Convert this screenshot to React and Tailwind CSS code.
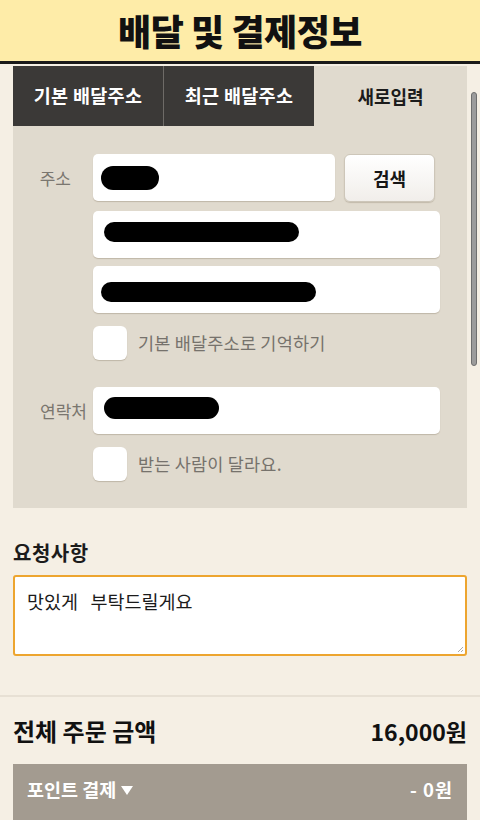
import React from "react";

const font = { fontFamily: '"Noto Sans CJK KR", "Noto Sans", sans-serif' };

function Blob({ w, h = 22, className = "" }) {
  return (
    <span
      className={`inline-block rounded-full bg-black ${className}`}
      style={{ width: w, height: h }}
    />
  );
}

function Input({ children, className = "" }) {
  return (
    <div
      className={`h-[47px] rounded-[5px] bg-white shadow-[0_1px_1px_rgba(150,140,120,0.45)] flex items-center px-[8px] ${className}`}
    >
      {children}
    </div>
  );
}

function Check({ label }) {
  return (
    <div className="flex items-center gap-[11px]">
      <div className="w-[34px] h-[34px] rounded-[6px] bg-white shadow-[0_1px_1px_rgba(150,140,120,0.45)]" />
      <span className="text-[17.5px] text-[#76726c] tracking-[0.2px]">{label}</span>
    </div>
  );
}

export default function App() {
  return (
    <div className="w-[480px] h-[820px] overflow-hidden bg-[#f5efe4] relative" style={font}>
      <header className="h-[64px] bg-[#feeca8] border-b-[3px] border-[#1a1a1a] flex items-center justify-center">
        <h1 className="text-[36px] font-black tracking-[-0.5px] text-[#111] leading-none mt-[-1px]">
          배달 및 결제정보
        </h1>
      </header>

      <div className="absolute right-[3px] top-[92px] w-[6px] h-[274px] rounded-full bg-[#9c9c9c] border border-[#6f6f6f]" />

      <div className="mx-[13px] mt-[2px] w-[454px] bg-[#e0dace]">
        <div className="flex h-[60px]">
          <div className="w-[151px] bg-[#3b3937] text-white font-bold text-[18.5px] tracking-[0.3px] flex items-center justify-center border-r border-[#6e6b67]">
            기본 배달주소
          </div>
          <div className="w-[150px] bg-[#3b3937] text-white font-bold text-[18.5px] tracking-[0.3px] flex items-center justify-center">
            최근 배달주소
          </div>
          <div className="flex-1 text-[#1b1b1b] font-bold text-[18px] flex items-center justify-center">
            새로입력
          </div>
        </div>

        <div className="pt-[28px] pb-[27px] pr-[27px]">
          <div className="flex">
            <div className="w-[80px] pt-[11px] text-right pr-[22px] text-[17px] text-[#7a766f]">주소</div>
            <div className="flex-1 flex flex-col">
              <div className="flex gap-[9px]">
                <Input className="w-[242px]">
                  <Blob w={58} h={24} />
                </Input>
                <div className="w-[91px] h-[48px] rounded-[6px] bg-gradient-to-b from-white to-[#f1eeea] border border-[#cdc6b9] shadow-[0_1px_1px_rgba(150,140,120,0.4)] flex items-center justify-center font-bold text-[18px] text-[#161616]">
                  검색
                </div>
              </div>
              <Input className="mt-[9px]">
                <span className="ml-[3px]"><Blob w={195} h={20} /></span>
              </Input>
              <Input className="mt-[8px]">
                <Blob w={215} h={20} className="mt-[4px]" />
              </Input>
              <div className="mt-[13px]">
                <Check label="기본 배달주소로 기억하기" />
              </div>
            </div>
          </div>

          <div className="flex mt-[27px]">
            <div className="w-[80px] pt-[11px] text-[17px] text-[#7a766f]">
              <span className="inline-block ml-[27px]">연락처</span>
            </div>
            <div className="flex-1 flex flex-col gap-[13px]">
              <Input>
                <span className="ml-[3px]"><Blob w={115} h={22} /></span>
              </Input>
              <Check label="받는 사람이 달라요." />
            </div>
          </div>
        </div>
      </div>

      <div className="px-[13px] mt-[30px]">
        <div className="text-[20px] font-bold text-[#1b1b1b] tracking-[0.5px] leading-[30px]">요청사항</div>
        <div className="mt-[7px] h-[81px] rounded-[3px] border-2 border-[#eda52f] bg-white px-[12px] pt-[11px] text-[18.5px] text-[#1b1b1b] relative">
          맛있게&nbsp;&nbsp;&nbsp;부탁드릴게요
          <svg className="absolute right-[1px] bottom-[1px]" width="7" height="7" viewBox="0 0 7 7">
            <path d="M6 1 L1 6 M6 4 L4 6" stroke="#aaa" strokeWidth="1" />
          </svg>
        </div>
      </div>

      <div className="mt-[39px] border-t-2 border-[#e7e0d4]" />

      <div className="px-[13px] mt-[16px] flex items-center justify-between">
        <span className="text-[24px] font-bold text-[#111]">전체 주문 금액</span>
        <span className="text-[23px] font-bold text-[#111]">16,000원</span>
      </div>

      <div className="mx-[13px] mt-[15px] h-[60px] bg-[#a39b90] flex items-start justify-between px-[14px] pt-[12px] text-white font-bold text-[18.5px]">
        <span className="flex items-center gap-[5px]">
          포인트 결제
          <svg width="12" height="10" viewBox="0 0 12 10"><path d="M0 1 L12 1 L6 10 Z" fill="white" /></svg>
        </span>
        <span className="tracking-[1px]">- 0원</span>
      </div>
    </div>
  );
}
